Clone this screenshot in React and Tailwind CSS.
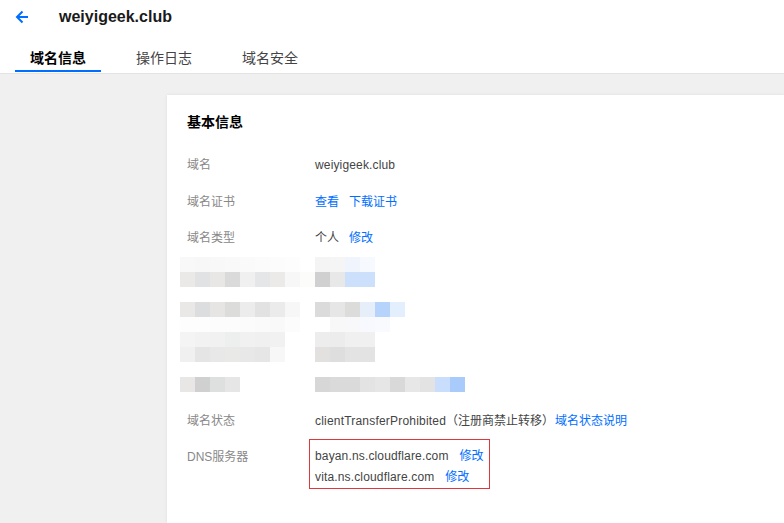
import React from "react";

const CJK = { fontFamily: '"Liberation Sans", Arial, "Noto Sans CJK SC", sans-serif' };

const mosaic = [
  { left: [0, ["#f8f8f8", "#f7f7f7", "#f8f8f8", "#f9f9f9", "#fafafa", "#fbfbfb", "#fcfcfc", "#fdfdfd"]], right: [0, ["#f4f4f4", "#f5f5f5", "#f0f5fd", "#f6f9fe"]] },
  { left: [0, ["#ebe9e7", "#e1e2e3", "#e8e7e5", "#dadada", "#f0f0f0", "#e5e6e8", "#ebeae8", "#f6f7f6", "#fcfcfb"]], right: [0, ["#d0d0d0", "#e8e8e8", "#cce0fc", "#cce0fc"]] },
  { left: [0, []], right: [0, []] },
  { left: [0, ["#e9e8e6", "#dcdddf", "#e6e5e3", "#dcdcda", "#ebeceb", "#e1e2e1", "#ebebeb", "#f7f7f7"]], right: [0, ["#dcdbdb", "#e6e6e6", "#dcdcdb", "#e6eefa", "#b5d3fb", "#e3effd"]] },
  { left: [0, ["#fdfdfd", "#fdfdfd", "#fcfcfc", "#fcfcfc", "#fbfbfb", "#fafafa", "#f9f9f9", "#fcfcfc"]], right: [0, ["#ffffff", "#f8f8f8", "#f8f8fa", "#f7f9fe", "#f8fafe"]] },
  { left: [0, ["#f4f4f4", "#f2f2f2", "#f1f1f1", "#edefee", "#f1f1f1", "#f0f0f0", "#f1f1f1"]], right: [0, ["#ededed", "#ececec", "#f0f0f0", "#f0f0f0"]] },
  { left: [0, ["#f0f0f0", "#e5e5e5", "#e8e8e8", "#e9e9e8", "#e8e8e8", "#e5e6e5", "#f7f7f7"]], right: [0, ["#e2e1e0", "#dedede", "#e3e3e3", "#e3e3e3"]] },
  { left: [0, []], right: [0, []] },
  { left: [0, ["#e8e7e6", "#d0d0d0", "#dde0df", "#e6e6e6"]], right: [0, ["#d7d7d7", "#dadada", "#dadada", "#e3e3e3", "#e6e6e6", "#d9d9d9", "#e7e7e7", "#e3e3e3", "#c9ddfc", "#a9cbfc"]] },
];

function Blocks({ colors }) {
  return (
    <div className="flex">
      {colors.map((c, i) => (
        <div key={i} className="w-[15px] h-[15px]" style={{ backgroundColor: c }} />
      ))}
    </div>
  );
}

function Row({ label, children }) {
  return (
    <div className="flex items-center h-[36.5px] text-[12px]">
      <div className="w-[128px] text-[#888]">{label}</div>
      <div className="flex items-center text-[#444]">{children}</div>
    </div>
  );
}

export default function App() {
  return (
    <div className="w-[784px] h-[523px] overflow-hidden bg-[#f0f0f0] flex flex-col" style={CJK}>
      <div className="bg-white border-b border-[#e3e3e3] flex flex-col shrink-0">
        <div className="flex items-center h-[34px] pl-[15px]">
          <svg width="14" height="14" viewBox="0 0 14 14" fill="none" stroke="#006eff" strokeWidth="2">
            <path d="M13 7H2" />
            <path d="M7.5 1.5L2 7l5.5 5.5" />
          </svg>
          <span className="ml-[30px] text-[16px] font-bold text-[#1a1a1a]">weiyigeek.club</span>
        </div>
        <div className="flex gap-[20px] pl-[15px] mt-[14px] pb-px">
          <div className="flex flex-col">
            <div className="h-[20px] leading-[20px] px-[15px] text-[14px] font-bold text-black">域名信息</div>
            <div className="mt-[2px] h-[2px] bg-[#006eff]" />
          </div>
          <div className="flex flex-col">
            <div className="h-[20px] leading-[20px] px-[15px] text-[14px] text-[#444]">操作日志</div>
            <div className="mt-[2px] h-[2px]" />
          </div>
          <div className="flex flex-col">
            <div className="h-[20px] leading-[20px] px-[15px] text-[14px] text-[#444]">域名安全</div>
            <div className="mt-[2px] h-[2px]" />
          </div>
        </div>
      </div>

      <div className="flex-1 pl-[167px] pt-[21px]">
        <div className="bg-white h-full pl-[20px] pt-[17px] shadow-[0_0_3px_rgba(0,0,0,0.08)]">
          <div className="h-[20px] leading-[20px] text-[14px] font-bold text-black">基本信息</div>
          <div className="mt-[15px]">
            <Row label="域名"><span className="tracking-[0.15px]">weiyigeek.club</span></Row>
            <Row label="域名证书">
              <span className="text-[#006eff]">查看</span>
              <span className="text-[#006eff] ml-[10px]">下载证书</span>
            </Row>
            <Row label="域名类型">
              <span>个人</span>
              <span className="text-[#006eff] ml-[10px]">修改</span>
            </Row>
          </div>
          <div className="flex flex-col">
            {mosaic.map((r, i) => (
              <div key={i} className="flex h-[15px]">
                <div className="ml-[-7px] w-[135px]">
                  <Blocks colors={r.left[1]} />
                </div>
                <Blocks colors={r.right[1]} />
              </div>
            ))}
          </div>
          <div className="mt-[11px]">
            <Row label="域名状态">
              <span className="tracking-[0.2px]">clientTransferProhibited</span>
              <span>（注册商禁止转移）</span>
              <span className="text-[#006eff] ml-[1px]">域名状态说明</span>
            </Row>
          </div>
          <div className="flex text-[12px]">
            <div className="w-[122px] text-[#888] pt-[9px]">DNS服务器</div>
            <div className="border border-[#e0363c] w-[181px] h-[50px] pl-[5px] pt-[8px] text-[#444]">
              <div className="h-[16px] leading-[16px] flex">
                <span className="tracking-[0.15px]">bayan.ns.cloudflare.com</span>
                <span className="ml-[11px] text-[#006eff]">修改</span>
              </div>
              <div className="h-[16px] leading-[16px] flex mt-[5px]">
                <span className="tracking-[0.15px]">vita.ns.cloudflare.com</span>
                <span className="ml-[11px] text-[#006eff]">修改</span>
              </div>
            </div>
          </div>
        </div>
      </div>
    </div>
  );
}
